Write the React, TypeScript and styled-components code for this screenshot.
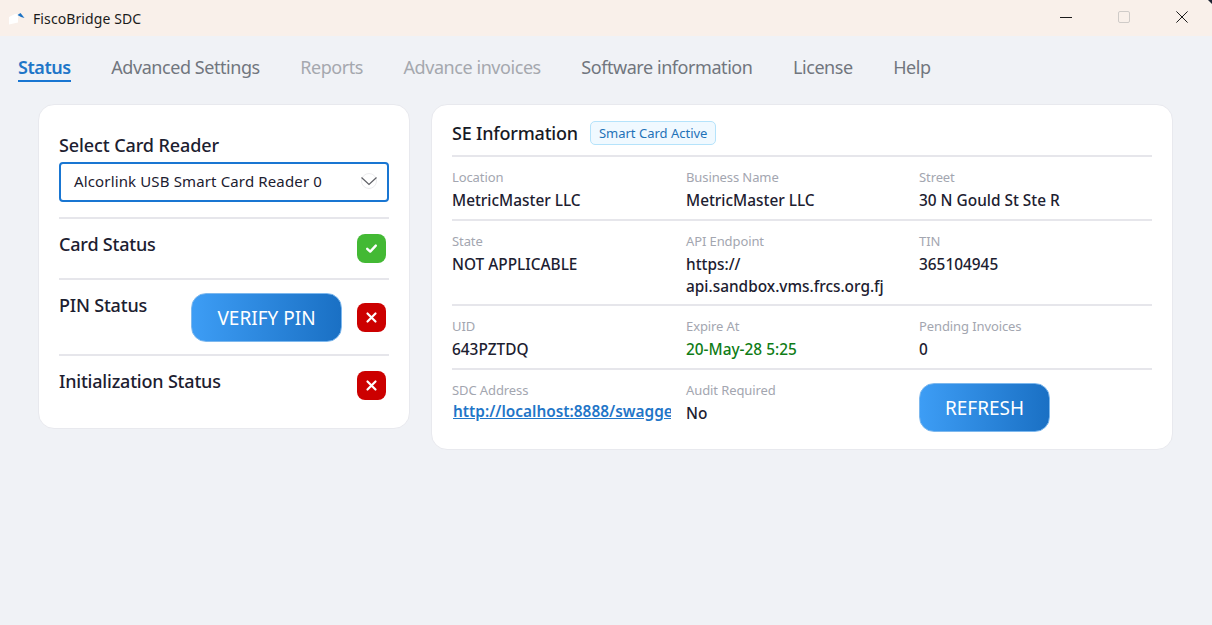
import React from "react";
import styled, { createGlobalStyle } from "styled-components";

const Global = createGlobalStyle`
  html, body { margin: 0; padding: 0; height: 100%; background: #f0f2f6; overflow: hidden; }
  #root { height: 100%; }
  * { box-sizing: border-box; }
`;

const Shell = styled.div`
  width: 1212px; height: 625px; display: flex; flex-direction: column;
  background: #f0f2f6; color: #1c2030;
  font-family: "Noto Sans", "Open Sans", "Liberation Sans", sans-serif;
`;
const TitleBar = styled.header`
  position: relative; height: 36px; flex: none; display: flex; align-items: center; background: #f9f0ea;
  padding-left: 8px;
  &::after {
    content: ""; position: absolute; top: 0; right: 0; width: 4px; height: 4px;
    background: #1d2433; clip-path: polygon(0 0, 100% 0, 100% 100%);
  }
`;
const AppTitle = styled.span`font-size: 14px; color: #1b1b1b; margin-left: 8px; letter-spacing: 0.1px;`;
const WindowControls = styled.div`margin-left: auto; margin-right: 0.5px; display: flex;`;
const WindowButton = styled.div`
  width: 58.33px; height: 36px; display: flex; align-items: center; justify-content: center; padding-bottom: 3px;
`;
const Nav = styled.nav`
  display: flex; gap: 40.5px; padding: 19px 0 0 18px; height: 68px; flex: none;
`;
const Tab = styled.span<{ $active?: boolean; $disabled?: boolean }>`
  height: 27px; font-size: 18px; line-height: 25px; letter-spacing: -0.44px; white-space: nowrap;
  font-weight: ${p => (p.$active ? 600 : 400)};
  color: ${p => (p.$active ? "#1f76c8" : p.$disabled ? "#a5a8ae" : "#71767e")};
  border-bottom: ${p => (p.$active ? "2px solid #1976d2" : "none")};
`;
const Content = styled.main`
  display: flex; align-items: flex-start; gap: 21px; padding-left: 38px;
`;
const Card = styled.section<{ $width: number }>`
  width: ${p => p.$width}px; flex: none; background: #fff; border: 1px solid #e8e9ee; border-radius: 16px;
`;
const LeftCard = styled(Card)`padding: 20px 20px 0; height: 325px;`;
const RightCard = styled(Card)`padding: 6px 20px 0; height: 346px;`;
const FieldTitle = styled.div`font-size: 18px; line-height: 40px; font-weight: 500; letter-spacing: -0.1px; height: 37px;`;
const SelectBox = styled.div`
  height: 40px; border: 2px solid #1976d2; border-radius: 4px; display: flex; align-items: center;
  justify-content: space-between; padding: 0 9px 2px 13px; font-size: 15px; letter-spacing: 0.14px; color: #1c2030;
`;
const StatusRow = styled.div<{ $height: number }>`
  height: ${p => p.$height}px; border-top: 2px solid #e6e6eb; display: flex; align-items: flex-start; padding-right: 3px;
`;
const FirstRowGap = styled.div`height: 15px;`;
const StatusLabel = styled.div`
  font-size: 18px; font-weight: 500; letter-spacing: -0.2px; line-height: 24px; margin-top: 13px; margin-right: auto; white-space: nowrap;
`;
const Badge = styled.div<{ $ok?: boolean; $top: number }>`
  width: 29px; height: 29px; border-radius: 8px; margin-top: ${p => p.$top}px; flex: none;
  background: ${p => (p.$ok ? "#43b934" : "#cc0000")}; display: flex; align-items: center; justify-content: center;
`;
const ActionButton = styled.button<{ $width: number }>`
  width: ${p => p.$width}px; height: 49px; border: 1px solid #7db8ee; border-radius: 15px; color: #fff;
  background: linear-gradient(90deg, #3d9df5, #1a70c4); font-family: inherit; font-size: 19px; padding: 0;
  letter-spacing: 0; flex: none;
`;
const VerifyButton = styled(ActionButton)`margin: 13px 15px 0 0;`;
const Header = styled.div`
  display: flex; align-items: center; height: 44px; gap: 12px;
`;
const Heading = styled.h2`margin: 0; font-size: 18px; font-weight: 500; color: #171a26; letter-spacing: -0.2px; white-space: nowrap;`;
const Chip = styled.span`
  height: 24px; padding: 0 8px; display: flex; align-items: center; font-size: 13px; letter-spacing: 0;
  color: #1f72b8; background: #f0f9ff; border: 1px solid #b5e3fb; border-radius: 5px; white-space: nowrap;
`;
const InfoRow = styled.div<{ $height: number }>`
  height: ${p => p.$height}px; border-top: 2px solid #e6e6eb; display: grid; grid-template-columns: 234px 233px 1fr;
`;
const Cell = styled.div`padding-top: 10px; min-width: 0;`;
const CellLabel = styled.div`font-size: 13px; line-height: 20px; color: #a3a6b0; letter-spacing: -0.1px;`;
const CellValue = styled.div<{ $green?: boolean }>`
  font-size: 15.4px; line-height: 22px; margin-top: 3px; font-weight: 500;
  color: ${p => (p.$green ? "#0f7c16" : "#1c2030")};
`;
const LinkValue = styled.a`
  display: block; width: 218px; overflow: hidden; white-space: nowrap; margin: 1px 0 0 1px; line-height: 22px;
  font-size: 15.4px; font-weight: 600; color: #1f76c8; text-decoration: underline;
`;
const ButtonCell = styled.div`padding-top: 13px;`;

const Check = () => (
  <svg width="13" height="13" viewBox="0 0 13 13" fill="none"><path d="M2.2 6.8 5.2 9.6 10.8 3.6" stroke="#fff" strokeWidth="2.4" strokeLinecap="round" strokeLinejoin="round" /></svg>
);
const Cross = () => (
  <svg width="13" height="13" viewBox="0 0 13 13" fill="none"><path d="M2.5 2.5 10.5 10.5M10.5 2.5 2.5 10.5" stroke="#fff" strokeWidth="2.2" strokeLinecap="round" /></svg>
);
const Chevron = () => (
  <svg width="18" height="18" viewBox="0 0 18 18" fill="none">
    <circle cx="9" cy="9" r="7.5" stroke="#ececee" strokeWidth="1" />
    <path d="M1.5 5.5 9 12.5 16.5 5.5" stroke="#5f6066" strokeWidth="1.2" fill="none" />
  </svg>
);
const Logo = () => (
  <svg width="17" height="13" viewBox="0 0 17 13" fill="none">
    <path d="M1 5 7 2H10V10.5L1 12.5Z" fill="#fff" />
    <path d="M9.5 3 12.5 1 16.5 6 13 5Z" fill="#1c72c4" />
  </svg>
);

const info = [
  { h: 64, cells: [["Location", "MetricMaster LLC"], ["Business Name", "MetricMaster LLC"], ["Street", "30 N Gould St Ste R"]] },
  { h: 85, cells: [["State", "NOT APPLICABLE"], ["API Endpoint", "https://\napi.sandbox.vms.frcs.org.fj"], ["TIN", "365104945"]] },
  { h: 64, cells: [["UID", "643PZTDQ"], ["Expire At", "20-May-28 5:25"], ["Pending Invoices", "0"]] },
];
const tabs: [string, boolean?, boolean?][] = [
  ["Status", true], ["Advanced Settings"], ["Reports", false, true], ["Advance invoices", false, true],
  ["Software information"], ["License"], ["Help"],
];

export default function App() {
  return (
    <Shell>
      <Global />
      <TitleBar>
        <Logo />
        <AppTitle>FiscoBridge SDC</AppTitle>
        <WindowControls>
          <WindowButton><svg width="12" height="12" viewBox="0 0 12 12"><path d="M0 6.5H12" stroke="#1b1b1b" strokeWidth="1" /></svg></WindowButton>
          <WindowButton><svg width="12" height="12" viewBox="0 0 12 12"><rect x=".5" y=".5" width="11" height="11" rx="1.5" fill="none" stroke="#cfcbc8" /></svg></WindowButton>
          <WindowButton><svg width="12" height="12" viewBox="0 0 12 12"><path d="M.4.4 11.6 11.6M11.6.4.4 11.6" stroke="#1b1b1b" strokeWidth="1" /></svg></WindowButton>
        </WindowControls>
      </TitleBar>
      <Nav>
        {tabs.map(([t, a, d]) => <Tab key={t} $active={a} $disabled={d}>{t}</Tab>)}
      </Nav>
      <Content>
        <LeftCard $width={372}>
          <FieldTitle>Select Card Reader</FieldTitle>
          <SelectBox>Alcorlink USB Smart Card Reader 0<Chevron /></SelectBox>
          <FirstRowGap />
          <StatusRow $height={61}>
            <StatusLabel>Card Status</StatusLabel>
            <Badge $ok $top={15}><Check /></Badge>
          </StatusRow>
          <StatusRow $height={76}>
            <StatusLabel>PIN Status</StatusLabel>
            <VerifyButton $width={151}>VERIFY PIN</VerifyButton>
            <Badge $top={23}><Cross /></Badge>
          </StatusRow>
          <StatusRow $height={70}>
            <StatusLabel>Initialization Status</StatusLabel>
            <Badge $top={15}><Cross /></Badge>
          </StatusRow>
        </LeftCard>
        <RightCard $width={742}>
          <Header>
            <Heading>SE Information</Heading>
            <Chip>Smart Card Active</Chip>
          </Header>
          {info.map(row => (
            <InfoRow key={row.cells[0][0]} $height={row.h}>
              {row.cells.map(([l, v]) => (
                <Cell key={l}>
                  <CellLabel>{l}</CellLabel>
                  <CellValue $green={l === "Expire At"}>
                    {v.split("\n").map(x => <div key={x}>{x}</div>)}
                  </CellValue>
                </Cell>
              ))}
            </InfoRow>
          ))}
          <InfoRow $height={80}>
            <Cell>
              <CellLabel>SDC Address</CellLabel>
              <LinkValue>http://localhost:8888/swagger</LinkValue>
            </Cell>
            <Cell>
              <CellLabel>Audit Required</CellLabel>
              <CellValue>No</CellValue>
            </Cell>
            <ButtonCell><ActionButton $width={131}>REFRESH</ActionButton></ButtonCell>
          </InfoRow>
        </RightCard>
      </Content>
    </Shell>
  );
}
